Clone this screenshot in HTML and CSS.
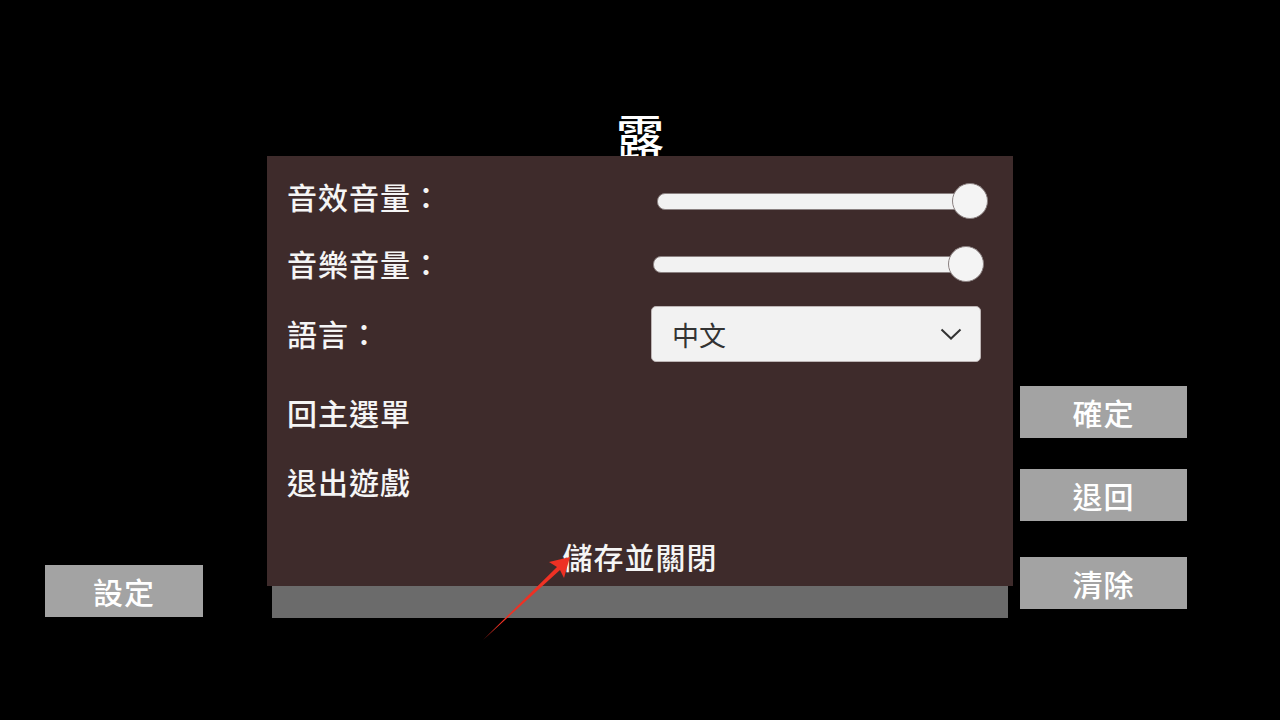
FILE: index.html
```html
<!DOCTYPE html>
<html lang="zh-Hant">
<head>
    <meta charset="UTF-8">
    <meta name="viewport" content="width=device-width, initial-scale=1.0">
    <title>設定</title>
    <link rel="stylesheet" href="styles.css">
</head>
<body>
    <!-- Cena de fundo -->
    <div class="scene">
        <div class="title">露</div>
        <div class="bottom-row">
            <div class="col-left">
                <button class="game-btn">設定</button>
            </div>
            <div class="col-mid">
                <div class="gray-bar"></div>
            </div>
            <div class="col-right">
                <button class="game-btn">確定</button>
                <button class="game-btn btn-back">退回</button>
                <button class="game-btn btn-clear">清除</button>
            </div>
        </div>
    </div>

    <!-- Painel de configurações -->
    <div class="settings-panel">
        <div class="row row-sfx">
            <span class="label">音效音量：</span>
            <div class="slider slider-sfx">
                <div class="track"></div>
                <div class="thumb"></div>
            </div>
        </div>
        <div class="row row-music">
            <span class="label">音樂音量：</span>
            <div class="slider slider-music">
                <div class="track"></div>
                <div class="thumb"></div>
            </div>
        </div>
        <div class="row row-lang">
            <span class="label">語言：</span>
            <div class="select">
                <span>中文</span>
                <svg width="22" height="12" viewBox="0 0 22 12"><path d="M1.5 1.5 L11 10.5 L20.5 1.5" fill="none" stroke="#333" stroke-width="2"/></svg>
            </div>
        </div>
        <div class="row row-menu"><span class="label">回主選單</span></div>
        <div class="row row-quit"><span class="label">退出遊戲</span></div>
        <div class="save">儲存並關閉</div>
    </div>

    <!-- Seta vermelha -->
    <svg class="arrow" width="1280" height="720" viewBox="0 0 1280 720">
        <polygon points="483,640 557,567 549,562 570,557 564,578 560,570" fill="#ee3124"/>
    </svg>
</body>
</html>
```
FILE: styles.css
```css
body {
    margin: 0;
    padding: 0;
    width: 1280px;
    height: 720px;
    background: #000;
    color: #f5f5f5;
    font-family: "Noto Sans CJK TC", "Noto Sans", sans-serif;
    font-weight: 500;
    overflow: hidden;
    position: relative;
}
.scene {
    display: flex;
    flex-direction: column;
    padding-top: 110px;
}
.title {
    text-align: center;
    font-size: 48px;
    line-height: 48px;
    height: 48px;
    color: #fff;
}
.bottom-row {
    display: flex;
    margin-top: 228px;
    padding-left: 45px;
}
.col-left {
    width: 158px;
    padding-top: 179px;
}
.col-mid {
    width: 736px;
    margin-left: 69px;
    padding-top: 200px;
}
.col-right {
    width: 167px;
    margin-left: 12px;
    display: flex;
    flex-direction: column;
}
.gray-bar {
    height: 32px;
    background: #6b6b6b;
}
.game-btn {
    width: 100%;
    height: 52px;
    border: none;
    padding: 0;
    background: #a3a3a3;
    color: #fff;
    font-family: inherit;
    font-weight: 500;
    font-size: 30px;
    line-height: 52px;
    letter-spacing: 1px;
}
.btn-back {
    margin-top: 31px;
}
.btn-clear {
    margin-top: 36px;
}
.settings-panel {
    position: absolute;
    left: 267px;
    top: 156px;
    width: 746px;
    height: 430px;
    background: #3e2b2b;
    box-sizing: border-box;
    padding: 10px 0 0 20px;
    display: flex;
    flex-direction: column;
}
.row {
    display: flex;
    align-items: center;
    justify-content: space-between;
}
.label {
    font-size: 30px;
    line-height: 36px;
    letter-spacing: 1px;
}
.row-sfx { height: 64px; }
.row-sfx .label { margin-bottom: 5px; }
.row-music { height: 68px; }
.row-music .label { margin-bottom: 2px; }
.row-lang { height: 72px; }
.row-lang .label { margin-bottom: 2px; }
.row-menu { height: 84px; }
.row-quit { height: 54px; }
.slider {
    position: relative;
    width: 331px;
    height: 36px;
}
.slider-sfx {
    margin-right: 25px;
    margin-top: 6px;
}
.slider-music {
    margin-right: 29px;
}
.track {
    position: absolute;
    left: 0;
    right: 14px;
    top: 10px;
    height: 15px;
    border-radius: 8px;
    background: #f2f2f2;
    border: 1px solid #8a8080;
}
.thumb {
    position: absolute;
    right: 0;
    top: 0;
    width: 34px;
    height: 34px;
    border-radius: 50%;
    background: #f4f4f4;
    border: 1px solid #8a8080;
}
.select {
    width: 330px;
    height: 56px;
    margin-right: 32px;
    box-sizing: border-box;
    background: #f2f2f2;
    border: 1px solid #bdb5b5;
    border-radius: 5px;
    display: flex;
    align-items: center;
    justify-content: space-between;
    padding: 0 18px 0 20px;
    color: #333;
    font-size: 27px;
    font-weight: 400;
}
.save {
    margin-top: 20px;
    height: 58px;
    line-height: 56px;
    text-align: center;
    font-size: 30px;
    letter-spacing: 1px;
    padding-right: 20px;
}
.arrow {
    position: absolute;
    left: 0;
    top: 0;
    pointer-events: none;
}
```
